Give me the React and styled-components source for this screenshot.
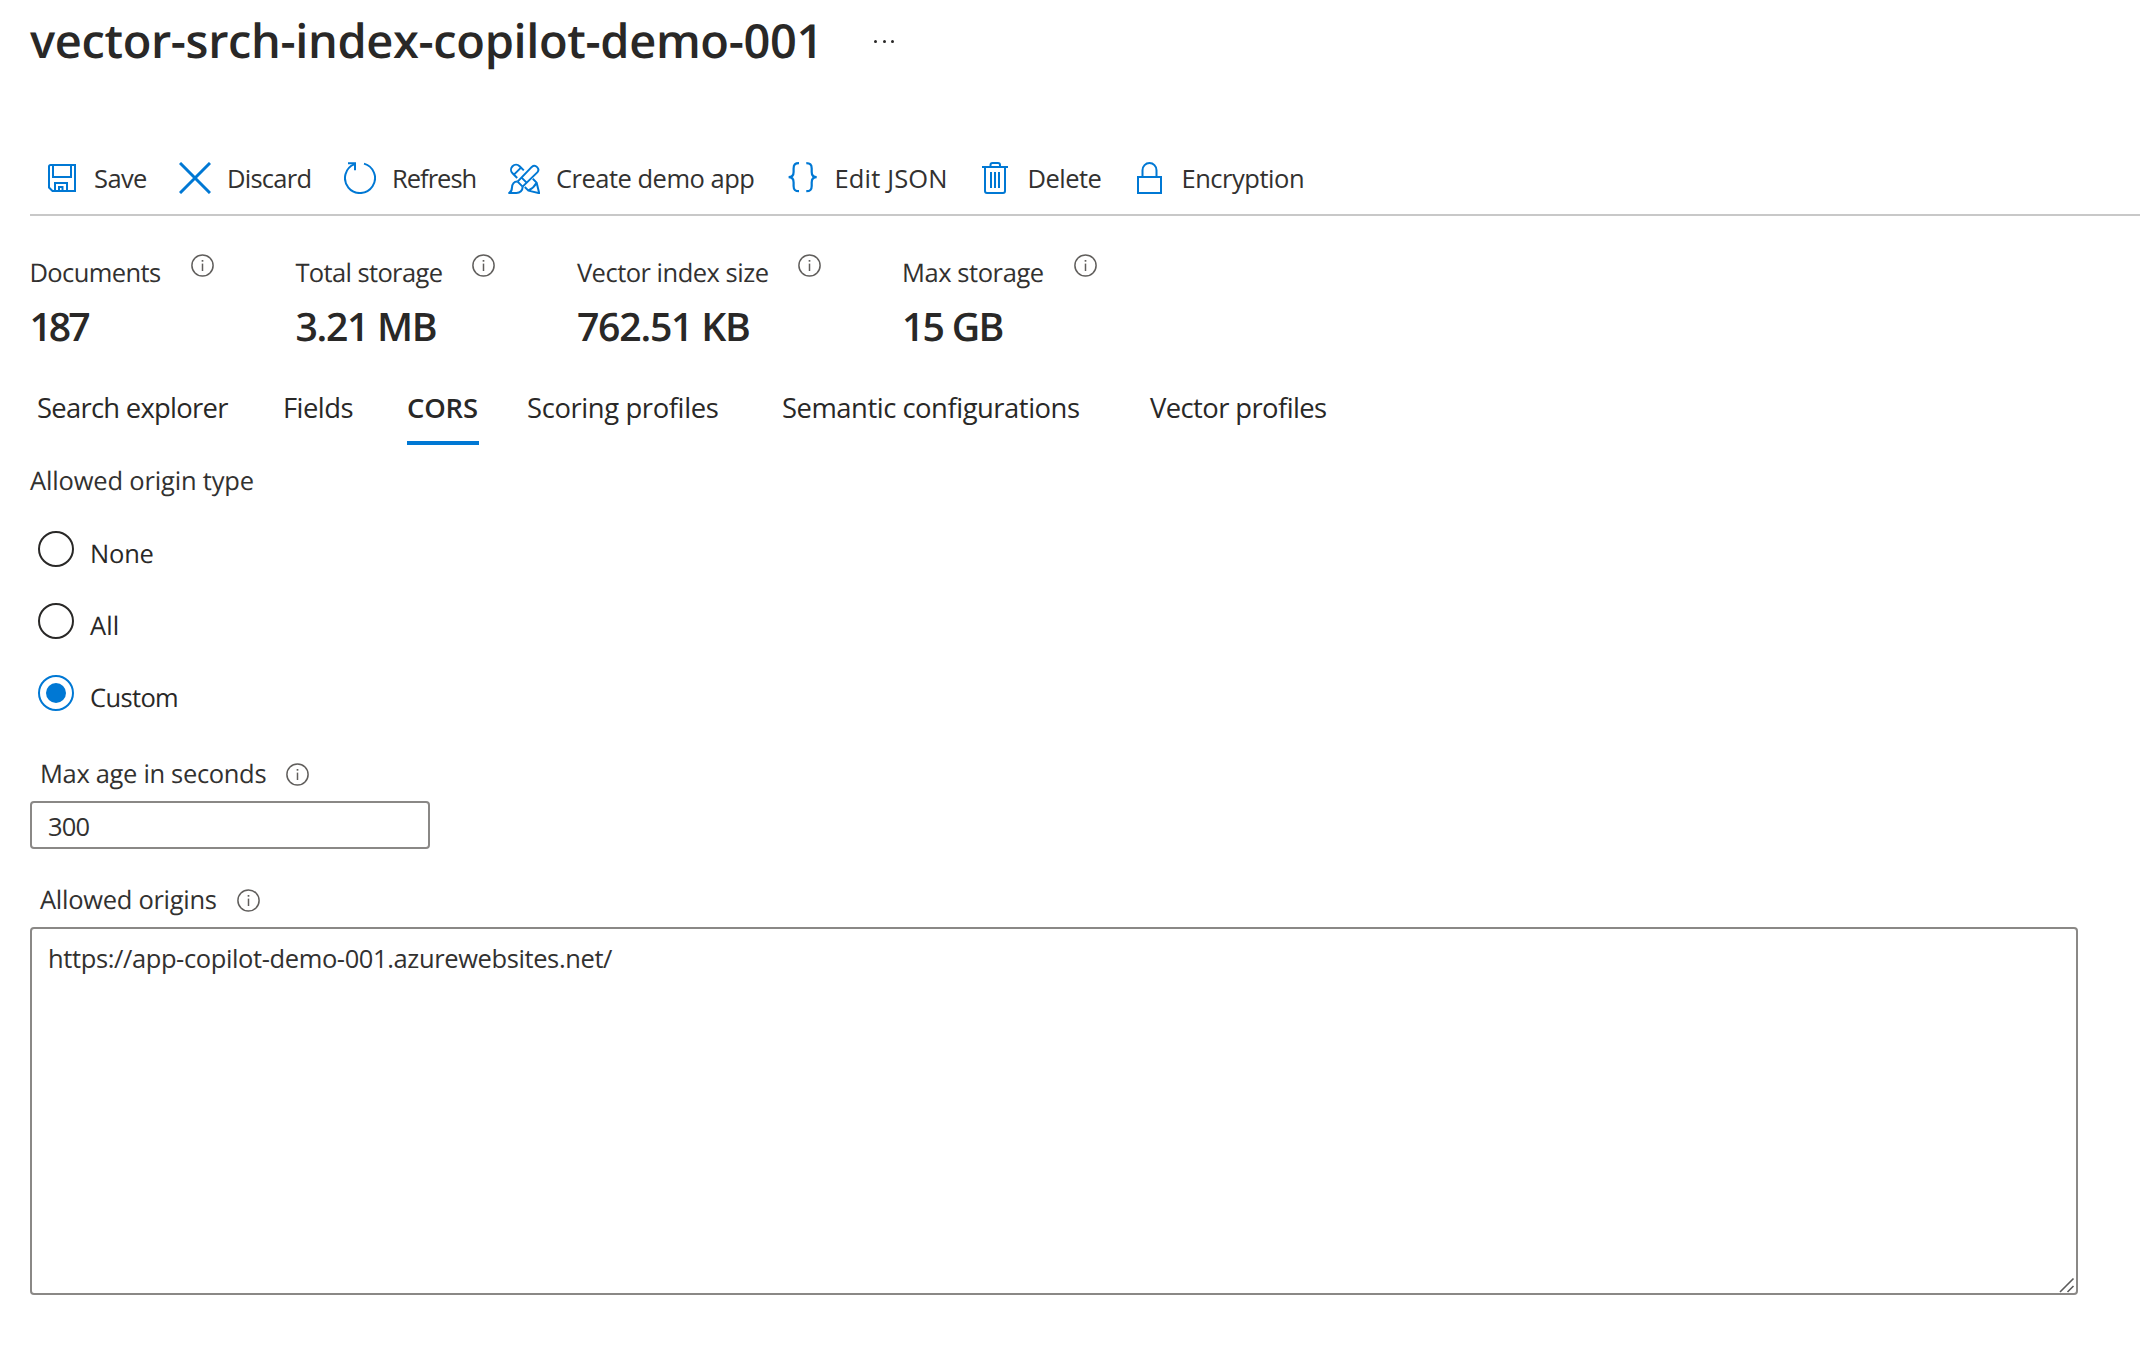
import React from 'react';
import styled, { createGlobalStyle } from 'styled-components';

const GlobalStyle = createGlobalStyle`
  *, *::before, *::after { box-sizing: border-box; }
  body {
    margin: 0;
    background: #fff;
    color: #292827;
    font-family: "Open Sans", "Noto Sans", sans-serif;
    font-size: 25.5px;
    line-height: 34px;
    text-rendering: geometricPrecision;
    overflow: hidden;
  }
`;

const Page = styled.main`
  display: flex;
  flex-direction: column;
  height: 1352px;
  padding-left: 30px;
  background: #fff;
`;

const Header = styled.header`
  display: flex;
  gap: 56px;
  height: 142px;
  padding-top: 10px;
`;

const Title = styled.h1`
  margin: 0;
  width: 788px;
  font-size: 47px;
  font-weight: 600;
  line-height: 60px;
  letter-spacing: -0.37px;
  white-space: nowrap;
`;

const MoreButton = styled.button`
  display: flex;
  align-items: center;
  justify-content: space-between;
  width: 22px;
  height: 63px;
  margin: 0 0 0 -1px;
  padding: 0;
  border: 0;
  background: none;
`;

const Dot = styled.span`
  width: 3px;
  height: 3px;
  margin: 0 1px;
  border-radius: 50%;
  background: #292827;
`;

const Toolbar = styled.nav`
  display: flex;
  align-items: center;
  height: 74px;
  padding-left: 16px;
  border-bottom: 2px solid #c8c8c8;
`;

const Command = styled.button`
  display: flex;
  align-items: center;
  gap: ${(p) => p.$gap || 16}px;
  width: ${(p) => p.$width}px;
  padding: 0;
  border: 0;
  background: none;
  color: #323130;
  font: inherit;
  letter-spacing: ${(p) => p.$tracking}px;
  white-space: nowrap;
`;

const CommandIcon = styled.svg`
  flex: none;
  width: 32px;
  height: 32px;
  fill: none;
  stroke: #0078d4;
  stroke-width: 2;
`;

const Stats = styled.section`
  display: grid;
  grid-template-columns: 266px 281.5px 325px auto;
  height: 134px;
  margin-left: -0.6px;
  padding-top: 38px;
`;

const Stat = styled.div`
  display: flex;
  flex-direction: column;
  gap: 9px;
`;

const StatLabel = styled.div`
  display: flex;
  align-items: flex-start;
  gap: 30px;
  height: 36px;
  line-height: 38px;
  color: #323130;
  letter-spacing: ${(p) => p.$tracking}px;
  white-space: nowrap;
`;

const StatValue = styled.div`
  font-size: 39.2px;
  font-weight: 600;
  line-height: 56px;
  letter-spacing: ${(p) => p.$tracking}px;
  white-space: nowrap;
`;

const InfoSvg = styled.svg`
  flex: none;
  width: 23px;
  height: 23px;
  fill: none;
  stroke: #605e5c;
`;

const Tabs = styled.div`
  display: flex;
  height: 114px;
  padding: 39px 0 0 7px;
`;

const TabSlot = styled.div`
  width: ${(p) => p.$width}px;
`;

const Tab = styled.button`
  height: 56px;
  padding: 0 1px 14px 0;
  border: 0;
  border-bottom: 4px solid ${(p) => (p.$active ? '#0078d4' : 'transparent')};
  background: none;
  color: #292827;
  font: inherit;
  font-size: 27.4px;
  font-weight: ${(p) => (p.$active ? 600 : 400)};
  line-height: 38px;
  letter-spacing: ${(p) => p.$tracking}px;
  white-space: nowrap;
`;

const GroupLabel = styled.div`
  height: 67px;
  color: #323130;
  letter-spacing: -0.17px;
`;

const RadioGroup = styled.div`
  display: flex;
  flex-direction: column;
  gap: 36px;
  padding-left: 8px;
`;

const Radio = styled.label`
  display: flex;
  gap: 16px;
  height: 36px;
`;

const RadioMark = styled.span`
  display: grid;
  place-items: center;
  width: 36px;
  height: 36px;
  border: 2px solid ${(p) => (p.$checked ? '#0078d4' : '#292827')};
  border-radius: 50%;

  &::after {
    content: '';
    width: 20px;
    height: 20px;
    border-radius: 50%;
    background: ${(p) => (p.$checked ? '#0078d4' : 'transparent')};
  }
`;

const RadioText = styled.span`
  padding-top: 6px;
  letter-spacing: ${(p) => p.$tracking}px;
`;

const Field = styled.div`
  display: flex;
  flex-direction: column;
  gap: 10px;
  margin-top: ${(p) => p.$top}px;
`;

const FieldLabel = styled.label`
  display: flex;
  align-items: center;
  gap: 20px;
  height: 34px;
  padding-left: 10px;
  color: #323130;
  letter-spacing: ${(p) => p.$tracking}px;
`;

const TextInput = styled.input`
  width: 400px;
  height: 48px;
  padding: 2px 16px 0;
  border: 2px solid #8a8886;
  border-radius: 4px;
  outline: 0;
  background: #fff;
  color: #323130;
  font: inherit;
  letter-spacing: -0.8px;
`;

const AreaWrap = styled.div`
  position: relative;
  width: 2048px;
  height: 368px;
`;

const TextArea = styled.textarea`
  display: block;
  width: 100%;
  height: 100%;
  padding: 12px 16px;
  border: 2px solid #8a8886;
  border-radius: 4px;
  outline: 0;
  resize: none;
  background: #fff;
  color: #323130;
  font: inherit;
  letter-spacing: -0.385px;
`;

const ResizeGrip = styled.svg`
  position: absolute;
  right: 3px;
  bottom: 2px;
  width: 16px;
  height: 16px;
  fill: none;
  stroke: #5c5c5c;
  stroke-width: 1.6;
`;

const InfoIcon = () => (
  <InfoSvg viewBox="0 0 23 23">
    <circle cx="11.5" cy="11.5" r="10.6" strokeWidth="1.5" />
    <path d="M11.5 9.6V17" strokeWidth="1.5" />
    <path d="M11.5 6V7.7" strokeWidth="1.7" />
  </InfoSvg>
);

const icons = {
  save: (
    <>
      <path d="M4.5 3H29V29H6.5L3 25.5V4.5A1.5 1.5 0 0 1 4.5 3Z" />
      <path d="M7 3V15H25V3M9 29V21H21V29M13 29V25H16.5V29" />
    </>
  ),
  discard: <path d="M1 1L31 31M31 1L1 31" strokeWidth="3" />,
  refresh: (
    <>
      <path d="M20 1.6A15 15 0 1 1 10.5 2.1" />
      <path d="M4 1.2H11V8.2" />
    </>
  ),
  create: (
    <g strokeLinejoin="round">
      <path d="M9.6 19.6L23.8 4.9A3.9 3.9 0 0 1 29.3 10.4L14.6 24.6" />
      <path d="M9.6 19.6L14.6 24.6M13.6 15.6L18.6 20.6" />
      <path d="M9.6 19.6C6 19.4 4.2 21.8 4 25.4C3.9 28.2 3.2 30 1.2 31H8.4C12 31 14.8 28.6 14.6 24.6" />
      <path d="M15.8 8.4L11.6 4.2A4.9 4.9 0 0 0 4.5 11.3L9.2 16M13 5.6L6.2 12.4" />
      <path d="M24.8 16.8L28.6 20.6L31.2 31.2L20.4 28.6L16.8 25M28.4 21C26.6 24.4 24.4 26.6 20.8 28.2" />
    </g>
  ),
  json: (
    <path
      d="M13 1.2C9 1.2 7.6 2.6 7.6 6.4V10C7.6 13.6 6.4 15.2 2.6 15.2C6.4 15.2 7.6 17 7.6 20.4V24C7.6 27.8 9 29.2 13 29.2M20.3 1.2C24.3 1.2 25.7 2.6 25.7 6.4V10C25.7 13.6 26.9 15.2 30.7 15.2C26.9 15.2 25.7 17 25.7 20.4V24C25.7 27.8 24.3 29.2 20.3 29.2"
      strokeWidth="2.2"
    />
  ),
  trash: (
    <>
      <path d="M3 5H29M11.5 5V3A2 2 0 0 1 13.5 1H19A2 2 0 0 1 21 3V5" />
      <path d="M6 5V29A2 2 0 0 0 8 31H24A2 2 0 0 0 26 29V5" />
      <path d="M12 10V26M16 10V26M20 10V26" />
    </>
  ),
  lock: (
    <>
      <rect x="5" y="15" width="23" height="16" />
      <path d="M9.5 15V8.2A7 7.2 0 0 1 23.5 8.2V15" />
    </>
  ),
};

const commands = [
  { icon: 'save', label: 'Save', width: 133, tracking: -0.6 },
  { icon: 'discard', label: 'Discard', width: 165, tracking: -0.75 },
  { icon: 'refresh', label: 'Refresh', width: 164, tracking: -1 },
  { icon: 'create', label: 'Create demo app', width: 278, tracking: -0.5 },
  { icon: 'json', label: 'Edit JSON', width: 193, tracking: 0.15, gap: 16.5 },
  { icon: 'trash', label: 'Delete', width: 154, tracking: -0.52, gap: 16.5 },
  { icon: 'lock', label: 'Encryption', width: 172, tracking: -0.47, gap: 16.5 },
];

const stats = [
  { label: 'Documents', tracking: -0.6, value: '187', valueTracking: -3 },
  { label: 'Total storage', tracking: -0.62, value: '3.21 MB', valueTracking: -1.3 },
  { label: 'Vector index size', tracking: -0.5, value: '762.51 KB', valueTracking: -1.24 },
  { label: 'Max storage', tracking: -0.42, value: '15 GB', valueTracking: -1.7 },
];

const tabs = [
  { label: 'Search explorer', width: 246, tracking: -0.72 },
  { label: 'Fields', width: 124, tracking: -0.54 },
  { label: 'CORS', width: 120, tracking: -0.17, active: true },
  { label: 'Scoring profiles', width: 255, tracking: -0.38 },
  { label: 'Semantic configurations', width: 368, tracking: -0.47 },
  { label: 'Vector profiles', width: 200, tracking: -0.58 },
];

const origins = [
  { label: 'None', tracking: -0.2 },
  { label: 'All', tracking: 0.1 },
  { label: 'Custom', tracking: -0.64, checked: true },
];

export default function App() {
  return (
    <>
      <GlobalStyle />
      <Page>
        <Header>
          <Title>vector-srch-index-copilot-demo-001</Title>
          <MoreButton aria-label="More">
            <Dot />
            <Dot />
            <Dot />
          </MoreButton>
        </Header>
        <Toolbar>
          {commands.map((c) => (
            <Command key={c.label} $width={c.width} $tracking={c.tracking} $gap={c.gap}>
              <CommandIcon viewBox="0 0 32 32">{icons[c.icon]}</CommandIcon>
              {c.label}
            </Command>
          ))}
        </Toolbar>
        <Stats>
          {stats.map((s) => (
            <Stat key={s.label}>
              <StatLabel $tracking={s.tracking}>
                {s.label}
                <InfoIcon />
              </StatLabel>
              <StatValue $tracking={s.valueTracking}>{s.value}</StatValue>
            </Stat>
          ))}
        </Stats>
        <Tabs>
          {tabs.map((t) => (
            <TabSlot key={t.label} $width={t.width}>
              <Tab $active={t.active} $tracking={t.tracking}>
                {t.label}
              </Tab>
            </TabSlot>
          ))}
        </Tabs>
        <GroupLabel>Allowed origin type</GroupLabel>
        <RadioGroup>
          {origins.map((o) => (
            <Radio key={o.label}>
              <RadioMark $checked={o.checked} />
              <RadioText $tracking={o.tracking}>{o.label}</RadioText>
            </Radio>
          ))}
        </RadioGroup>
        <Field $top={46}>
          <FieldLabel $tracking={-0.33}>
            Max age in seconds
            <InfoIcon />
          </FieldLabel>
          <TextInput defaultValue="300" />
        </Field>
        <Field $top={34}>
          <FieldLabel $tracking={-0.28}>
            Allowed origins
            <InfoIcon />
          </FieldLabel>
          <AreaWrap>
            <TextArea
              spellCheck={false}
              defaultValue="https://app-copilot-demo-001.azurewebsites.net/"
            />
            <ResizeGrip viewBox="0 0 16 16">
              <path d="M1 15L14.5 1.5M8.5 15L14.5 9" />
            </ResizeGrip>
          </AreaWrap>
        </Field>
      </Page>
    </>
  );
}
